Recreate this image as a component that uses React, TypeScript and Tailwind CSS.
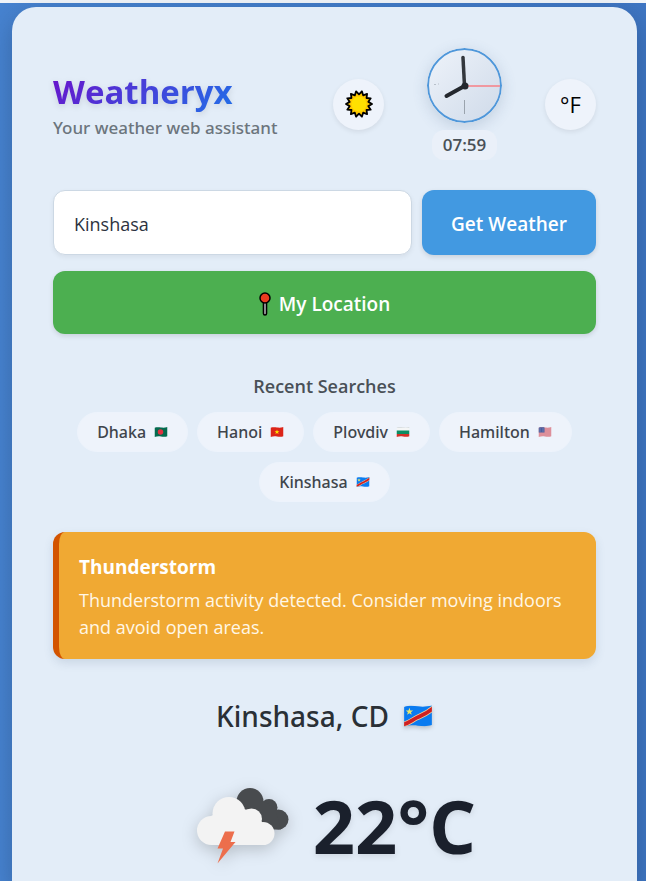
import { useId, useState, type ReactNode } from 'react';

type Country = 'BD' | 'VN' | 'BG' | 'US' | 'CD';

const recent: { city: string; country: Country }[] = [
  { city: 'Dhaka', country: 'BD' },
  { city: 'Hanoi', country: 'VN' },
  { city: 'Plovdiv', country: 'BG' },
  { city: 'Hamilton', country: 'US' },
  { city: 'Kinshasa', country: 'CD' },
];

const star = 'M0-4 1-1.3 3.8-1.2 1.6.5 2.4 3.2 0 1.6-2.4 3.2-1.6.5-3.8-1.2-1-1.3Z';
const wave = 'M1 1.500C6 0 10 .5 14 1S22 1.500 27 0V18.500C22 20 18 19.500 14 19S6 18.500 1 20Z';

const flagArt: Record<Country, ReactNode> = {
  BD: (
    <>
      <path d="M0 0H28V20H0Z" fill="#046a4e" />
      <circle cx="13" cy="10" r="5.500" fill="#e0313f" />
    </>
  ),
  VN: (
    <>
      <path d="M0 0H28V20H0Z" fill="#dc2418" />
      <path d={star} transform="translate(14 10) scale(1.3)" fill="#ffe600" />
    </>
  ),
  BG: (
    <>
      <path d="M0 0H28V8H0Z" fill="#f4f6f6" />
      <path d="M0 .8H28" stroke="#c3c9cc" strokeWidth="1.500" />
      <path d="M0 7H28V14H0Z" fill="#0a8d63" />
      <path d="M0 14H28V20H0Z" fill="#d32f27" />
    </>
  ),
  US: (
    <>
      <path d="M0 0H28V20H0Z" fill="#f1e9ee" />
      <path d="M0 2H28M0 6H28M0 10H28M0 14H28M0 18H28" stroke="#c93646" strokeWidth="2.200" />
      <path d="M0 0H13V11H0Z" fill="#4a5c9c" />
      <path d="M2 4H12M2 8H12" stroke="#d5dbef" strokeWidth="1" strokeDasharray="1 2" />
    </>
  ),
  CD: (
    <>
      <path d="M0 0H28V20H0Z" fill="#0a7bf0" />
      <path d="M-1 18C4 18 8 14 13 11.500S22 8 29 2" stroke="#f0cf9a" strokeWidth="5" fill="none" />
      <path d="M-1 18C4 18 8 14 13 11.500S22 8 29 2" stroke="#cf1f22" strokeWidth="3.600" fill="none" />
      <path d={star} transform="translate(6 6)  scale(.9)" fill="#e8e66b" />
    </>
  ),
};

function Flag({ country, className }: { country: Country; className: string }) {
  const id = useId();
  return (
    <svg viewBox="0 0 28 20" className={className} role="img" aria-label={country}>
      <clipPath id={id}>
        <path d={wave} />
      </clipPath>
      <g clipPath={`url(#${id})`}>{flagArt[country]}</g>
    </svg>
  );
}

function Sun() {
  const points = Array.from({ length: 28 }, (_, i) => {
    const r = i % 2 ? 9.6 : 13;
    const a = (i * Math.PI) / 14 + Math.PI / 14;
    return `${14 + r * Math.sin(a)},${14 - r * Math.cos(a)}`;
  }).join(' ');
  return (
    <svg viewBox="0 0 28 28" className="size-7" aria-hidden="true">
      <polygon points={points} fill="#ffc800" stroke="#000" strokeWidth="1.800" strokeLinejoin="round" />
      <circle cx="14" cy="14" r="7.500" fill="#ffe000" />
    </svg>
  );
}

function Clock() {
  return (
    <svg viewBox="0 0 75 75" className="size-[75px] rounded-full shadow-[0_4px_15px_rgba(60,90,130,0.2)]" role="img" aria-label="Clock">
      <defs>
        <linearGradient id="face" x1="0" y1="0" x2="1" y2="1">
          <stop offset="0" stopColor="#eef3fa" />
          <stop offset="1" stopColor="#cfdae9" />
        </linearGradient>
      </defs>
      <circle cx="37.500" cy="37.500" r="36.500" fill="url(#face)" stroke="#4f97da" strokeWidth="2" />
      <path d="M37.500 52V66" stroke="#9aa3ad" strokeWidth="1" />
      <path d="M7 36.500H9M11 36H12" stroke="#b8c0ca" strokeWidth="1" />
      <path d="M37.500 38 36 9.500" stroke="#33373d" strokeWidth="3.500" strokeLinecap="round" />
      <path d="M37.500 38 19.500 48" stroke="#24282e" strokeWidth="4" strokeLinecap="round" />
      <path d="M38 38H73" stroke="#f77f86" strokeWidth="1.500" />
      <circle cx="38" cy="38" r="3.500" fill="#24282e" />
    </svg>
  );
}

function Pin() {
  return (
    <svg viewBox="0 0 12 24" className="h-6 w-3" aria-hidden="true">
      <path d="M4.500 10H7.500V21.500A1.500 1.500 0 0 1 4.500 21.500Z" fill="#c3c7ca" stroke="#000" strokeWidth="1.600" />
      <circle cx="6" cy="6" r="5" fill="#ea3b20" stroke="#000" strokeWidth="1.500" />
    </svg>
  );
}

function StormIcon() {
  return (
    <svg viewBox="0 0 92 76" className="h-[76px] w-[92px] drop-shadow-[0_4px_8px_rgba(0,0,0,0.2)]" role="img" aria-label="Thunderstorm">
      <g fill="#484b4e">
        <circle cx="53" cy="13.500" r="13.500" />
        <circle cx="72" cy="19.500" r="8.500" />
        <circle cx="81.500" cy="31.500" r="10" />
        <path d="M40 13H66L78 20 84 41.500H60Z" />
      </g>
      <g fill="#f3f3f3">
        <circle cx="32" cy="25.500" r="16.500" />
        <circle cx="54.500" cy="31" r="10.500" />
        <circle cx="14.500" cy="42.500" r="14.500" />
        <circle cx="66" cy="45.500" r="11.500" />
        <path d="M14 28 32 20 54 22 65 34 66 57H14Z" />
      </g>
      <path d="M28 43.500H37.500L33.500 54H38.500L20.500 75.500 26 60.500H20.500Z" fill="#ec6e4c" />
    </svg>
  );
}

export default function App() {
  const [city, setCity] = useState('Kinshasa');
  return (
    <div className="border-t-3 border-[#f0f4f9] bg-[linear-gradient(90deg,#4682cf,#3e75c2)] pt-1 pr-[9px] pl-3 font-['Open_Sans','Noto_Sans',sans-serif] text-[#1a202c]">
      <main className="min-h-[877px] rounded-t-3xl bg-[#e3edf8] px-[41px] pt-[41px] shadow-[0_8px_24px_rgba(0,0,0,0.2)]">
        <header className="flex items-center justify-between">
          <div>
            <h1 className="w-fit bg-[linear-gradient(135deg,#6a11cb,#2070e8)] bg-clip-text text-[33px] leading-12 font-bold text-transparent drop-shadow-[0_2px_3px_rgba(0,0,0,0.12)]">
              Weatheryx
            </h1>
            <p className="font-['Noto_Sans',sans-serif] text-[17px] leading-6 font-medium text-[#6c757d]">Your weather web assistant</p>
          </div>
          <div className="flex items-center gap-[43px]">
            <button type="button" aria-label="Toggle theme" className="grid size-[51px] place-items-center rounded-full bg-[#eef3fb] shadow-[0_2px_5px_rgba(0,0,0,0.08)]">
              <Sun />
            </button>
            <div className="flex flex-col items-center gap-[7px]">
              <Clock />
              <time className="rounded-xl bg-[#eaf0f9] px-[11px] py-[3px] text-[17px] leading-6 font-semibold text-[#495057]">07:59</time>
            </div>
            <button type="button" aria-label="Switch to Fahrenheit" className="size-[51px] rounded-full bg-[#eef3fb] text-[22px] text-black shadow-[0_2px_5px_rgba(0,0,0,0.08)]">
              °F
            </button>
          </div>
        </header>

        <form className="mt-[30px] flex flex-wrap gap-x-[10px] gap-y-4" onSubmit={(e) => e.preventDefault()}>
          <input
            aria-label="City"
            value={city}
            onChange={(e) => setCity(e.target.value)}
            className="h-[65px] min-w-0 flex-1 rounded-xl border border-[#ccd8e4] bg-white px-5 pt-[2px] text-lg text-[#2d3340] shadow-[0_2px_5px_rgba(0,0,0,0.06)] outline-none"
          />
          <button type="submit" className="h-[65px] w-[174px] rounded-xl bg-[#4299e1] pt-[3px] text-[19px] font-semibold text-white shadow-[0_2px_5px_rgba(0,0,0,0.12)]">
            Get Weather
          </button>
          <button type="button" className="flex h-[63px] w-full items-center justify-center gap-2 rounded-xl bg-[#4caf50] pt-[3px] text-[19px] font-semibold text-white shadow-[0_2px_5px_rgba(0,0,0,0.12)]">
            <Pin />
            My Location
          </button>
        </form>

        <section className="mt-10">
          <h2 className="text-center text-lg leading-6 font-semibold text-[#495057]">Recent Searches</h2>
          <ul className="mt-[14px] flex flex-wrap justify-center gap-x-[9px] gap-y-[10px]">
            {recent.map(({ city: name, country }) => (
              <li key={name}>
                <button type="button" onClick={() => setCity(name)} className="flex h-10 items-center gap-2 rounded-full border border-[#edf3fc] bg-[#eef3fb] px-[19px] font-['Noto_Sans',sans-serif] text-base font-medium text-[#40454c]">
                  {name}
                  <Flag country={country} className="h-[10px] w-[14px]" />
                </button>
              </li>
            ))}
          </ul>
        </section>

        <section role="alert" className="mt-[30px] rounded-xl border-l-6 border-[#d35400] bg-[#f0a933] px-5 pt-[22px] pb-[18px] text-white shadow-[0_4px_10px_rgba(60,90,120,0.15)]">
          <h2 className="text-[19px] leading-[26px] font-bold">Thunderstorm</h2>
          <p className="mt-[7px] text-lg leading-[27px] text-[#fff7e6]">
            Thunderstorm activity detected. Consider moving indoors and avoid open areas.
          </p>
        </section>

        <h2 className="mt-[35px] flex items-center justify-center gap-[14px] font-['Noto_Sans',sans-serif] text-[28px] leading-11 font-medium text-[#2a3036]">
          Kinshasa, CD
          <Flag country="CD" className="h-[22px] w-[30px] drop-shadow-[0_2px_2px_rgba(0,0,0,0.2)]" />
        </h2>

        <div className="mt-[35px] flex items-center justify-center gap-6 pl-6">
          <StormIcon />
          <p className="text-[74px] leading-[106px] font-bold drop-shadow-[0_2px_3px_rgba(0,0,0,0.1)]">22°C</p>
        </div>
      </main>
    </div>
  );
}
